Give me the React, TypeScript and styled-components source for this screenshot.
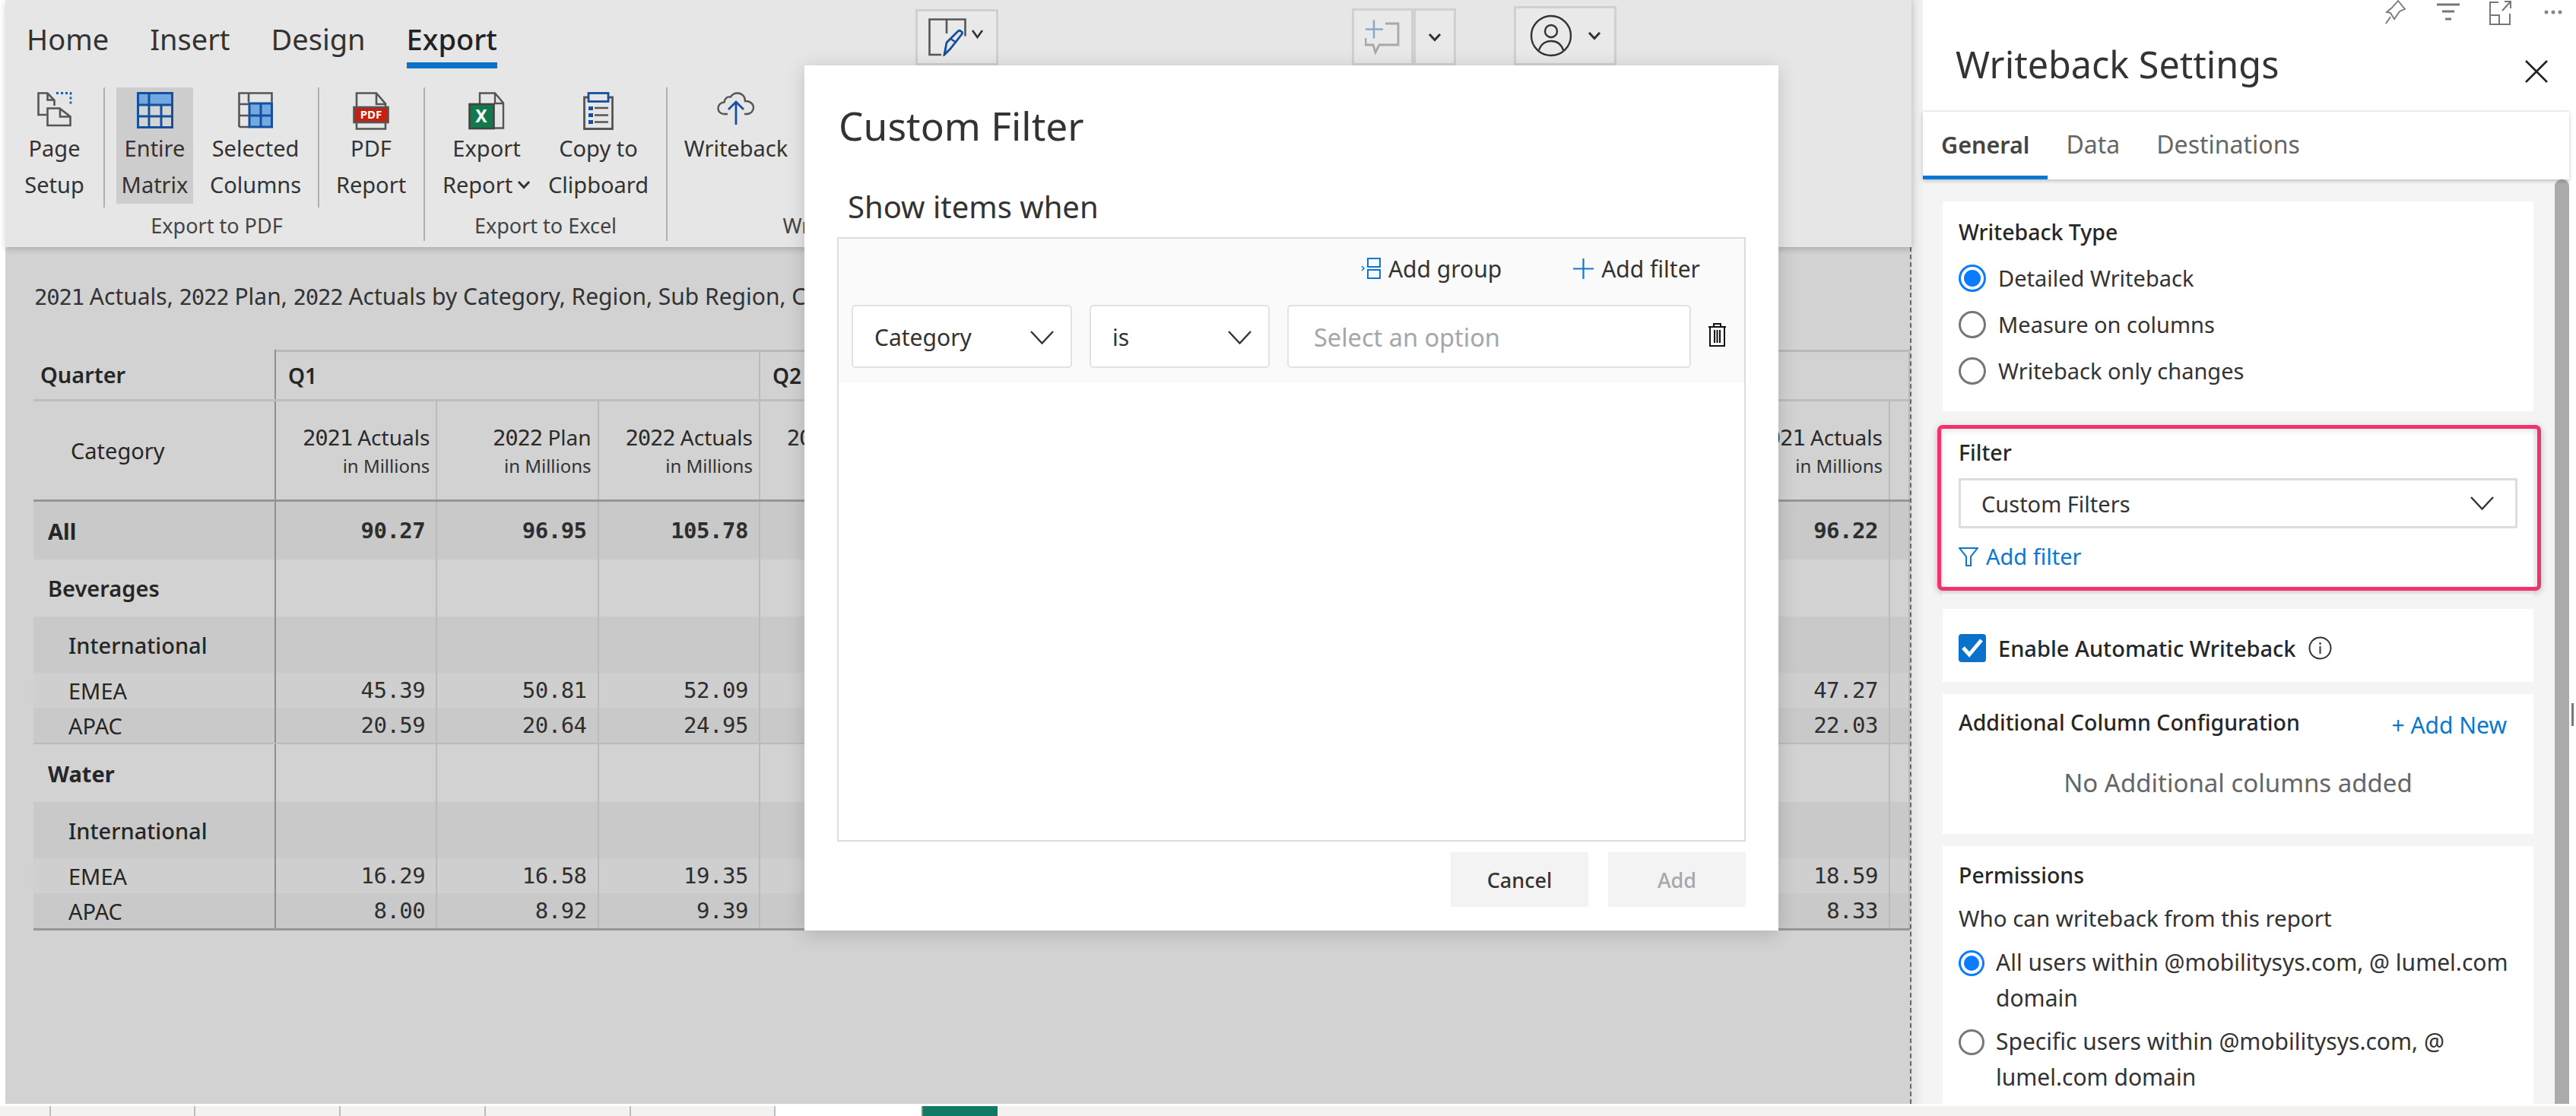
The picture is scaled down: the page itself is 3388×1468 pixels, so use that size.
import React from 'react';
import styled, { createGlobalStyle } from 'styled-components';

const GlobalStyle = createGlobalStyle`
  html, body {
    margin: 0;
    padding: 0;
    background: #ffffff;
  }
  body {
    font-family: "Noto Sans", "Open Sans", sans-serif;
    color: #333333;
  }
  * {
    box-sizing: border-box;
  }
`;

const Screen = styled.div`
  position: relative;
  width: 3388px;
  height: 1468px;
  overflow: hidden;
  background: #ffffff;
`;

const MainRow = styled.div`
  display: flex;
  height: 1452px;
  padding-left: 7px;
`;

const Report = styled.div`
  width: 2507px;
  background: #d2d2d2;
`;

const ReportBody = styled.div`
  height: 1127px;
  padding-top: 45px;
  border-right: 2px dashed #666666;
`;

const Ribbon = styled.div`
  position: relative;
  width: 2507px;
  height: 325px;
  background: #e6e6e6;
  box-shadow: 0 3px 8px rgba(0, 0, 0, 0.18);
`;

const TopRow = styled.div`
  display: flex;
  height: 115px;
  padding-left: 28px;
`;

const MenuTab = styled.div<{ $active?: boolean }>`
  height: 90px;
  margin-right: 54px;
  padding-top: 26px;
  line-height: 50px;
  font-size: 38px;
  font-weight: ${(p) => (p.$active ? 500 : 400)};
  color: ${(p) => (p.$active ? '#222222' : '#333333')};
  border-bottom: 8px solid ${(p) => (p.$active ? '#0a72c8' : 'transparent')};
`;

const ToolButton = styled.div<{ $left: number; $top: number; $width: number; $spread?: boolean }>`
  display: flex;
  align-items: center;
  justify-content: ${(p) => (p.$spread ? 'space-between' : 'center')};
  width: ${(p) => p.$width}px;
  height: ${(p) => 86 - p.$top}px;
  margin-left: ${(p) => p.$left}px;
  margin-top: ${(p) => p.$top}px;
  padding: ${(p) => (p.$spread ? '0 17px 0 18px' : '0')};
  background: #e9e9e9;
  border: 3px solid #d0d0d0;
`;

const RibbonBody = styled.div`
  display: flex;
  height: 202px;
`;

const Group = styled.div<{ $width: number; $last?: boolean }>`
  display: flex;
  flex-direction: column;
  width: ${(p) => p.$width}px;
  border-right: ${(p) => (p.$last ? 'none' : '2px solid #b0b0b0')};
`;

const GroupItems = styled.div`
  display: flex;
  height: 158px;
`;

const GroupLabel = styled.div<{ $shift?: number }>`
  height: 44px;
  padding-top: 2px;
  padding-left: ${(p) => p.$shift || 0}px;
  line-height: 44px;
  text-align: center;
  font-size: 27px;
  color: #444444;
`;

const RibbonButton = styled.div<{ $width: number; $active?: boolean; $gapLeft?: number; $gapRight?: number }>`
  display: flex;
  flex-direction: column;
  align-items: center;
  width: ${(p) => p.$width}px;
  height: 153px;
  margin-left: ${(p) => p.$gapLeft || 0}px;
  margin-right: ${(p) => p.$gapRight || 0}px;
  background: ${(p) => (p.$active ? '#cdcdcd' : 'transparent')};
`;

const IconSlot = styled.div`
  display: flex;
  align-items: flex-start;
  justify-content: center;
  height: 56px;
  padding-top: 6px;
`;

const ButtonLabel = styled.div`
  display: flex;
  align-items: center;
  gap: 6px;
  height: 48px;
  line-height: 48px;
  font-size: 29px;
  white-space: nowrap;
  color: #333333;
`;

const ShortRule = styled.div`
  width: 2px;
  height: 158px;
  background: #b0b0b0;
`;

const ReportTitle = styled.div`
  margin: 0 0 50px 38px;
  height: 40px;
  line-height: 40px;
  font-size: 30px;
  white-space: nowrap;
  color: #333333;
`;

const Digits = styled.span`
  font-family: "DejaVu Sans Mono", monospace;
  font-size: 29px;
  line-height: 30px;
  letter-spacing: -1.2px;
`;

const MatrixTable = styled.div`
  margin-left: 37px;
  width: 2468px;
  overflow: hidden;
`;

const MatrixRow = styled.div<{ $height: number; $tone?: 'dark' | 'light' | 'mid'; $rule?: string }>`
  display: grid;
  grid-template-columns: 319px repeat(10, 212.3px) 26px;
  height: ${(p) => p.$height}px;
  background: ${(p) =>
    p.$tone === 'dark' ? '#c9c9c9' : p.$tone === 'mid' ? '#cfcfcf' : '#d2d2d2'};
  border-bottom: ${(p) => p.$rule || 'none'};
`;

const Corner = styled.div<{ $indent: number; $weight?: number }>`
  display: flex;
  align-items: center;
  padding-left: ${(p) => p.$indent}px;
  font-size: 29px;
  font-weight: ${(p) => p.$weight || 400};
  color: #262626;
  border-right: 2px solid #8f8f8f;
`;

const QuarterCell = styled.div<{ $span: number }>`
  display: flex;
  align-items: center;
  grid-column: span ${(p) => p.$span};
  padding-left: 16px;
  font-size: 28px;
  font-weight: 600;
  color: #262626;
  border-top: 3px solid #b9b9b9;
  border-right: 2px solid #bbbbbb;
`;

const MeasureCell = styled.div`
  display: flex;
  flex-direction: column;
  align-items: flex-end;
  justify-content: center;
  padding-right: 8px;
  font-size: 28px;
  white-space: nowrap;
  color: #2b2b2b;
  border-right: 2px solid #bbbbbb;
`;

const MeasureName = styled.span`
  height: 40px;
  line-height: 40px;
`;

const MeasureUnit = styled.span`
  height: 36px;
  line-height: 36px;
  font-size: 24px;
  color: #333333;
`;

const ValueCell = styled.div<{ $bold?: boolean }>`
  display: flex;
  align-items: center;
  justify-content: flex-end;
  padding-right: 14px;
  font-family: "DejaVu Sans Mono", monospace;
  font-size: 29px;
  letter-spacing: -0.5px;
  font-weight: ${(p) => (p.$bold ? 700 : 400)};
  color: #2e2e2e;
  border-right: 2px solid #bbbbbb;
`;

const Strip = styled.div`
  width: 15px;
  background: linear-gradient(to right, #e3e3e3, #f2f2f2);
`;

const Panel = styled.div`
  display: flex;
  flex-direction: column;
  width: 850px;
  height: 1452px;
  background: #ffffff;
`;

const PanelIcons = styled.div`
  display: flex;
  justify-content: flex-end;
  gap: 39px;
  height: 36px;
  padding-right: 6px;
`;

const PanelHeader = styled.div`
  display: flex;
  justify-content: space-between;
  height: 111px;
  padding-left: 43px;
  border-bottom: 2px solid #f2f2f2;
`;

const PanelTitle = styled.div`
  margin-top: 15px;
  line-height: 66px;
  font-size: 48.5px;
  color: #333333;
`;

const CloseSlot = styled.div`
  margin-top: 42px;
  margin-right: 27px;
`;

const PanelTabs = styled.div`
  position: relative;
  z-index: 1;
  display: flex;
  height: 89px;
  background: #ffffff;
  box-shadow: 0 2px 5px rgba(0, 0, 0, 0.22);
`;

const PanelTab = styled.div<{ $active?: boolean }>`
  height: 89px;
  padding: 18px 24px 0;
  line-height: 50px;
  font-size: ${(p) => (p.$active ? 30.5 : 32)}px;
  font-weight: ${(p) => (p.$active ? 600 : 400)};
  color: ${(p) => (p.$active ? '#444444' : '#666666')};
  border-bottom: 5px solid ${(p) => (p.$active ? '#0078d4' : 'transparent')};
`;

const PanelBody = styled.div`
  display: flex;
  flex: 1;
  min-height: 0;
  background: #f4f4f4;
`;

const CardColumn = styled.div`
  display: flex;
  flex-direction: column;
  gap: 16px;
  width: 831px;
  height: 100%;
  padding: 29px 0 0 26px;
  overflow: hidden;
`;

const ScrollThumb = styled.div`
  width: 19px;
  height: 100%;
  background: #ababab;
  border-radius: 9px 9px 0 0;
`;

const EdgeColumn = styled.div`
  width: 9px;
  padding: 925px 3px 0 3px;
`;

const EdgeTick = styled.div`
  width: 3px;
  height: 30px;
  background: #777777;
`;

const Card = styled.div<{ $height: number; $top?: number }>`
  position: relative;
  flex: none;
  width: 777px;
  height: ${(p) => p.$height}px;
  padding: ${(p) => p.$top ?? 18}px 21px 0;
  background: #ffffff;
`;

const CardHeading = styled.div`
  line-height: 40px;
  font-size: 28.5px;
  font-weight: 500;
  color: #262626;
  white-space: nowrap;
`;

const RadioStack = styled.div`
  margin-top: 10px;
`;

const RadioRow = styled.div`
  display: flex;
  align-items: center;
  gap: 16px;
  height: 61px;
  font-size: 29px;
  color: #333333;
`;

const RadioMark = styled.span<{ $checked?: boolean; $size: number }>`
  display: flex;
  flex: none;
  align-items: center;
  justify-content: center;
  width: ${(p) => p.$size}px;
  height: ${(p) => p.$size}px;
  border: 3px solid ${(p) => (p.$checked ? '#0a7cff' : '#777777')};
  border-radius: 50%;
  &::after {
    content: '';
    display: ${(p) => (p.$checked ? 'block' : 'none')};
    width: ${(p) => p.$size - 14}px;
    height: ${(p) => p.$size - 14}px;
    border-radius: 50%;
    background: #0a7cff;
  }
`;

const HighlightFrame = styled.div`
  position: absolute;
  left: -7px;
  top: 2px;
  width: 794px;
  height: 218px;
  border: 5px solid #f0336c;
  border-radius: 7px;
  box-shadow: 0 2px 8px rgba(0, 0, 0, 0.25), inset 0 2px 8px rgba(0, 0, 0, 0.12);
`;

const SelectBox = styled.div`
  display: flex;
  align-items: center;
  justify-content: space-between;
  height: 66px;
  margin-top: 14px;
  padding: 0 28px 0 27px;
  border: 3px solid #dddddd;
  font-size: 29px;
  color: #333333;
`;

const BlueLink = styled.div`
  display: flex;
  align-items: center;
  gap: 10px;
  margin-top: 17px;
  line-height: 40px;
  font-size: 29px;
  color: #0a78d2;
`;

const AutoRow = styled.div`
  display: flex;
  align-items: center;
  gap: 16px;
  height: 40px;
  font-size: 29px;
  font-weight: 500;
  color: #262626;
`;

const CheckMark = styled.span`
  display: flex;
  flex: none;
  align-items: center;
  justify-content: center;
  width: 36px;
  height: 37px;
  background: #0b72cc;
  border-radius: 4px;
`;

const HeadingRow = styled.div`
  display: flex;
  align-items: center;
  justify-content: space-between;
  height: 40px;
  padding-right: 14px;
`;

const AddNew = styled.span`
  padding-top: 6px;
  font-size: 30px;
  color: #0a78d2;
`;

const EmptyNote = styled.div`
  margin-top: 40px;
  line-height: 40px;
  text-align: center;
  font-size: 33px;
  color: #666666;
`;

const BodyLine = styled.div`
  margin-top: 17px;
  line-height: 40px;
  font-size: 29.5px;
  color: #333333;
`;

const PermissionOption = styled.div<{ $top: number }>`
  display: flex;
  gap: 15px;
  margin-top: ${(p) => p.$top}px;
  width: 730px;
  line-height: 47px;
  font-size: 30px;
  color: #333333;
`;

const RadioOffset = styled.span`
  padding-top: 8px;
`;

const BottomBar = styled.div`
  display: flex;
  height: 13px;
  margin-top: 3px;
  background: #f3f2f1;
`;

const SheetTab = styled.div<{ $width: number; $white?: boolean; $teal?: boolean }>`
  width: ${(p) => p.$width}px;
  background: ${(p) => (p.$white ? '#ffffff' : p.$teal ? '#127a63' : 'transparent')};
  border-right: 2px solid ${(p) => (p.$white ? '#888888' : p.$teal ? 'transparent' : '#bdbdbd')};
`;

const Modal = styled.div`
  position: absolute;
  left: 1058px;
  top: 86px;
  width: 1281px;
  height: 1138px;
  padding: 49px 43px 0;
  background: #ffffff;
  box-shadow: 0 4px 24px rgba(0, 0, 0, 0.16);
`;

const ModalTitle = styled.div`
  margin-left: 2px;
  line-height: 60px;
  font-size: 51.5px;
  color: #333333;
`;

const ModalSub = styled.div`
  margin: 52px 0 15px 14px;
  line-height: 50px;
  font-size: 40px;
  color: #333333;
`;

const FilterBox = styled.div`
  width: 1195px;
  height: 795px;
  border: 2px solid #dddddd;
`;

const FilterHead = styled.div`
  height: 190px;
  background: #fafafa;
`;

const FilterActions = styled.div`
  display: flex;
  align-items: center;
  justify-content: flex-end;
  gap: 94px;
  height: 78px;
  padding-right: 58px;
`;

const FilterAction = styled.div`
  display: flex;
  align-items: center;
  gap: 10px;
  font-size: 30px;
  color: #333333;
`;

const FilterFields = styled.div`
  display: flex;
  align-items: center;
  gap: 23px;
  margin-top: 9px;
  padding-left: 17px;
`;

const FieldBox = styled.div<{ $width: number; $hint?: boolean }>`
  display: flex;
  align-items: center;
  justify-content: space-between;
  width: ${(p) => p.$width}px;
  height: 83px;
  padding: 2px 22px 0 ${(p) => (p.$hint ? 33 : 28)}px;
  background: #ffffff;
  border: 2px solid #e2e2e2;
  border-radius: 5px;
  font-size: ${(p) => (p.$hint ? 32.5 : 30)}px;
  color: ${(p) => (p.$hint ? '#a6a6a6' : '#333333')};
`;

const ModalFooter = styled.div`
  display: flex;
  justify-content: flex-end;
  gap: 26px;
  width: 1195px;
  margin-top: 14px;
`;

const FooterButton = styled.div<{ $disabled?: boolean }>`
  display: flex;
  align-items: center;
  justify-content: center;
  width: 181px;
  height: 72px;
  background: #f3f3f3;
  font-size: 27px;
  font-weight: 500;
  color: ${(p) => (p.$disabled ? '#a8a8a8' : '#333333')};
`;

const Chevron = () => (
  <svg width={31} height={18} viewBox="0 0 31 18" fill="none">
    <polyline points="1,1 15.5,16.5 30,1" stroke="#333333" strokeWidth="2.4" />
  </svg>
);

const SmallChevron = () => (
  <svg width={18} height={12} viewBox="0 0 18 12" fill="none">
    <polyline points="2,2 9,9.5 16,2" stroke="#333333" strokeWidth="3" />
  </svg>
);

const PageSetupIcon = () => (
  <svg width={46} height={46} viewBox="0 0 46 46" fill="none" stroke="#555555" strokeWidth="2.6">
    <path d="M12 30H1.5V1.5h12l9 9.5v7" />
    <path d="M13.5 1.5v9h9" />
    <path d="M13.5 21.5h16l14 11v11.5h-30z" />
    <path d="M30 21.5v11h13" />
    <path d="M25 1.5h19v17" stroke="#1c5fb0" strokeWidth="2.8" strokeDasharray="3 3" />
  </svg>
);

const EntireMatrixIcon = () => (
  <svg width={48} height={48} viewBox="0 0 48 48" fill="none">
    <rect x="1.5" y="1.5" width="45" height="45" fill="#d4d4d4" stroke="#154f9e" strokeWidth="3" />
    <rect x="3" y="3" width="42" height="14" fill="#72a9e0" />
    <path d="M1.5 17h45M1.5 32h45M16 1.5v15M16 17v29.5M32 17v29.5" stroke="#154f9e" strokeWidth="3" />
  </svg>
);

const SelectedColumnsIcon = () => (
  <svg width={46} height={48} viewBox="0 0 46 48" fill="none">
    <path d="M1.5 46V1.5h43v12M14 1.5v12M1.5 16H14M1.5 31H14M1.5 46H14" stroke="#555555" strokeWidth="2.6" />
    <rect x="15" y="15" width="29.5" height="31" fill="#72a9e0" stroke="#154f9e" strokeWidth="3" />
    <path d="M30 15v31M15 31h29.5" stroke="#154f9e" strokeWidth="3" />
  </svg>
);

const PdfIcon = () => (
  <svg width={48} height={50} viewBox="0 0 48 50" fill="none">
    <path d="M5 20V1.5h26l12 14V20M5 36v12.5h38V36M31 1.5V16h12" stroke="#555555" strokeWidth="2.6" />
    <rect x="1.5" y="20" width="45" height="20" fill="#c8200f" stroke="#555555" strokeWidth="2.6" />
    <text x="24" y="35" textAnchor="middle" fontFamily="Noto Sans" fontWeight="700" fontSize="15" fill="#ffffff">
      PDF
    </text>
  </svg>
);

const ExcelIcon = () => (
  <svg width={48} height={50} viewBox="0 0 48 50" fill="none">
    <path d="M15 15V1.5h20l11 13v33H33M35 1.5V15h11" stroke="#555555" strokeWidth="2.4" />
    <rect x="1.5" y="16" width="32" height="32" fill="#107a4d" stroke="#444444" strokeWidth="2.6" />
    <text x="17" y="40" textAnchor="middle" fontFamily="Noto Sans" fontWeight="700" fontSize="23" fill="#ffffff">
      X
    </text>
  </svg>
);

const ClipboardIcon = () => (
  <svg width={40} height={50} viewBox="0 0 40 50" fill="none">
    <path d="M7 7H1.5v41.5h37V7H33" stroke="#555555" strokeWidth="2.8" />
    <rect x="7" y="1.5" width="26" height="11" fill="#e6e6e6" stroke="#154f9e" strokeWidth="2.8" />
    <rect x="7" y="19" width="6" height="5" fill="#154f9e" />
    <rect x="7" y="28" width="6" height="5" fill="#154f9e" />
    <rect x="7" y="37" width="6" height="5" fill="#154f9e" />
    <path d="M15 21h18M15 30.5h18M15 39.5h18" stroke="#555555" strokeWidth="2.4" />
  </svg>
);

const CloudIcon = () => (
  <svg width={50} height={44} viewBox="0 0 50 44" fill="none">
    <path
      d="M14 29H9C4 29 1.5 25 1.5 21.5 1.5 17 5 13.5 9.5 13.5 10.5 8 14 6 18 6.5 20 3 23.5 1.5 27 1.5c6 0 10 4.5 10 10.5 6-.5 11 3.5 11 8.5 0 5-4 8.5-9 8.5h-3"
      stroke="#555555"
      strokeWidth="2.4"
    />
    <path d="M25 43V13M15 23l10-10 10 10" stroke="#154f9e" strokeWidth="2.8" />
  </svg>
);

const PenTableIcon = () => (
  <svg width={74} height={50} viewBox="0 0 74 50" fill="none">
    <path d="M17 48H1.5V1.5h47v22M24 1.5V20" stroke="#555555" strokeWidth="2.6" />
    <path d="M21 48l3-16 15-15c2-2 7 1 5 4L29 40z" fill="#e6e6e6" stroke="#154f9e" strokeWidth="2.8" />
    <path d="M29 27l8 5" stroke="#154f9e" strokeWidth="2.4" />
    <polyline points="58,16 64.5,25 71,16" stroke="#333333" strokeWidth="2.6" />
  </svg>
);

const CommentIcon = () => (
  <svg width={46} height={48} viewBox="0 0 46 48" fill="none">
    <path d="M12 1.5v24M1 13.5h23" stroke="#8ca6c8" strokeWidth="2.5" />
    <path d="M27 6h17v28H19l-5 10-3-10H1V25" stroke="#a8a8a8" strokeWidth="2.8" />
  </svg>
);

const PersonIcon = () => (
  <svg width={56} height={56} viewBox="0 0 56 56" fill="none" stroke="#333333" strokeWidth="2.4">
    <circle cx="28" cy="28" r="26" />
    <circle cx="28" cy="22" r="8" />
    <path d="M12 47c3-9 9-12 16-12s13 3 16 12" />
  </svg>
);

const PinIcon = () => (
  <svg width={30} height={32} viewBox="0 0 30 32" fill="none" stroke="#777777" strokeWidth="1.8">
    <path d="M18 1l9 11-7 3-7 10-5-8-5-1 7-6z" />
    <path d="M8 22L2 31" />
  </svg>
);

const SortIcon = () => (
  <svg width={30} height={28} viewBox="0 0 30 28" fill="none" stroke="#777777" strokeWidth="3">
    <path d="M0 6h30M7 15h16M11 25h8" />
  </svg>
);

const ExpandIcon = () => (
  <svg width={30} height={34} viewBox="0 0 30 34" fill="none" stroke="#777777" strokeWidth="2">
    <path d="M12 3H1v29h26V18M1 20h12v12M17 14L28 2M20 2h8v9" />
  </svg>
);

const DotsIcon = () => (
  <svg width={30} height={32} viewBox="0 0 30 32" fill="#888888">
    <circle cx="6" cy="16" r="2.5" />
    <circle cx="15" cy="16" r="2.5" />
    <circle cx="24" cy="16" r="2.5" />
  </svg>
);

const CloseIcon = () => (
  <svg width={32} height={32} viewBox="0 0 32 32" fill="none" stroke="#222222" strokeWidth="2.6">
    <path d="M2 2l28 28M30 2L2 30" />
  </svg>
);

const CheckIcon = () => (
  <svg width={30} height={28} viewBox="0 0 30 28" fill="none" stroke="#ffffff" strokeWidth="5">
    <path d="M3 14l8 9L27 4" />
  </svg>
);

const InfoIcon = () => (
  <svg width={31} height={31} viewBox="0 0 31 31" fill="none" stroke="#333333" strokeWidth="2">
    <circle cx="15.5" cy="15.5" r="14" />
    <path d="M15.5 13v10M15.5 8v3" />
  </svg>
);

const FunnelIcon = () => (
  <svg width={26} height={25} viewBox="0 0 26 25" fill="none" stroke="#0a78d2" strokeWidth="2">
    <path d="M1 1h24l-9 11v12h-6V12z" />
  </svg>
);

const GroupIcon = () => (
  <svg width={26} height={28} viewBox="0 0 26 28" fill="none" stroke="#0a78d2" strokeWidth="2">
    <rect x="9" y="1" width="16" height="11" />
    <rect x="9" y="16" width="16" height="11" />
    <path d="M1 11l3 3-3 3" strokeWidth="1.5" />
  </svg>
);

const PlusIcon = () => (
  <svg width={27} height={27} viewBox="0 0 27 27" fill="none" stroke="#0a78d2" strokeWidth="2.2">
    <path d="M13.5 0v27M0 13.5h27" />
  </svg>
);

const TrashIcon = () => (
  <svg width={25} height={33} viewBox="0 0 25 33" fill="none" stroke="#111111" strokeWidth="2">
    <path d="M1 6h23M8 6V2h9v4M3 6v25h19V6M9 10v17M12.5 10v17M16 10v17" />
  </svg>
);

const TrashSlot = styled.span`
  margin-left: -1px;
`;

type Row = {
  label: string;
  indent: number;
  height: number;
  tone: 'dark' | 'light' | 'mid';
  weight?: number;
  rule?: string;
  values: string[];
  last?: string;
  bold?: boolean;
};

const rows: Row[] = [
  { label: 'All', indent: 19, height: 76, tone: 'dark', weight: 700, values: ['90.27', '96.95', '105.78'], last: '96.22', bold: true },
  { label: 'Beverages', indent: 19, height: 75, tone: 'light', weight: 600, values: [] },
  { label: 'International', indent: 46, height: 74, tone: 'dark', weight: 500, values: [] },
  { label: 'EMEA', indent: 46, height: 46, tone: 'mid', values: ['45.39', '50.81', '52.09'], last: '47.27' },
  { label: 'APAC', indent: 46, height: 48, tone: 'dark', rule: '2px solid #bbbbbb', values: ['20.59', '20.64', '24.95'], last: '22.03' },
  { label: 'Water', indent: 19, height: 76, tone: 'light', weight: 700, values: [] },
  { label: 'International', indent: 46, height: 74, tone: 'dark', weight: 500, values: [] },
  { label: 'EMEA', indent: 46, height: 46, tone: 'mid', values: ['16.29', '16.58', '19.35'], last: '18.59' },
  { label: 'APAC', indent: 46, height: 49, tone: 'dark', rule: '3px solid #969696', values: ['8.00', '8.92', '9.39'], last: '8.33' },
];

const measures = ['2021 Actuals', '2022 Plan', '2022 Actuals'];

const MeasureHead = ({ text }: { text: string }) => {
  const [year, name] = text.split(' ');
  return (
    <MeasureCell>
      <MeasureName>
        <Digits>{year}</Digits> {name}
      </MeasureName>
      <MeasureUnit>in Millions</MeasureUnit>
    </MeasureCell>
  );
};

const App = () => {
  return (
    <Screen>
      <GlobalStyle />
      <MainRow>
        <Report>
          <Ribbon>
            <TopRow>
              <MenuTab>Home</MenuTab>
              <MenuTab>Insert</MenuTab>
              <MenuTab>Design</MenuTab>
              <MenuTab $active>Export</MenuTab>
              <ToolButton $left={496} $top={12} $width={109}>
                <PenTableIcon />
              </ToolButton>
              <ToolButton $left={465} $top={11} $width={81}>
                <CommentIcon />
              </ToolButton>
              <ToolButton $left={0} $top={11} $width={56}>
                <SmallChevron />
              </ToolButton>
              <ToolButton $left={76} $top={8} $width={135} $spread>
                <PersonIcon />
                <SmallChevron />
              </ToolButton>
            </TopRow>
            <RibbonBody>
              <Group $width={552}>
                <GroupItems>
                  <RibbonButton $width={129}>
                    <IconSlot>
                      <PageSetupIcon />
                    </IconSlot>
                    <ButtonLabel>Page</ButtonLabel>
                    <ButtonLabel>Setup</ButtonLabel>
                  </RibbonButton>
                  <ShortRule />
                  <RibbonButton $width={101} $active $gapLeft={15}>
                    <IconSlot>
                      <EntireMatrixIcon />
                    </IconSlot>
                    <ButtonLabel>Entire</ButtonLabel>
                    <ButtonLabel>Matrix</ButtonLabel>
                  </RibbonButton>
                  <RibbonButton $width={164}>
                    <IconSlot>
                      <SelectedColumnsIcon />
                    </IconSlot>
                    <ButtonLabel>Selected</ButtonLabel>
                    <ButtonLabel>Columns</ButtonLabel>
                  </RibbonButton>
                  <ShortRule />
                  <RibbonButton $width={136}>
                    <IconSlot>
                      <PdfIcon />
                    </IconSlot>
                    <ButtonLabel>PDF</ButtonLabel>
                    <ButtonLabel>Report</ButtonLabel>
                  </RibbonButton>
                </GroupItems>
                <GroupLabel $shift={6}>Export to PDF</GroupLabel>
              </Group>
              <Group $width={319}>
                <GroupItems>
                  <RibbonButton $width={162}>
                    <IconSlot>
                      <ExcelIcon />
                    </IconSlot>
                    <ButtonLabel>Export</ButtonLabel>
                    <ButtonLabel>
                      Report
                      <SmallChevron />
                    </ButtonLabel>
                  </RibbonButton>
                  <RibbonButton $width={132} $gapRight={23}>
                    <IconSlot>
                      <ClipboardIcon />
                    </IconSlot>
                    <ButtonLabel>Copy to</ButtonLabel>
                    <ButtonLabel>Clipboard</ButtonLabel>
                  </RibbonButton>
                </GroupItems>
                <GroupLabel>Export to Excel</GroupLabel>
              </Group>
              <Group $width={430} $last>
                <GroupItems>
                  <RibbonButton $width={180}>
                    <IconSlot>
                      <CloudIcon />
                    </IconSlot>
                    <ButtonLabel>Writeback</ButtonLabel>
                  </RibbonButton>
                </GroupItems>
                <GroupLabel>Writeback</GroupLabel>
              </Group>
            </RibbonBody>
          </Ribbon>

          <ReportBody>
            <ReportTitle>
              <Digits>2021</Digits> Actuals, <Digits>2022</Digits> Plan, <Digits>2022</Digits> Actuals by Category, Region, Sub Region, Channel
            </ReportTitle>

            <MatrixTable>
              <MatrixRow $height={68} $rule="3px solid #bdbdbd">
                <Corner $indent={9} $weight={600}>Quarter</Corner>
                <QuarterCell $span={3}>Q1</QuarterCell>
                <QuarterCell $span={3}>Q2</QuarterCell>
                <QuarterCell $span={3}>Q3</QuarterCell>
                <QuarterCell $span={2}>Q4</QuarterCell>
              </MatrixRow>
              <MatrixRow $height={132} $rule="3px solid #969696">
                <Corner $indent={49}>Category</Corner>
                {[...measures, ...measures, ...measures, measures[0]].map((m, i) => (
                  <MeasureHead key={i} text={m} />
                ))}
                <MeasureCell />
              </MatrixRow>
              {rows.map((row, i) => (
                <MatrixRow key={i} $height={row.height} $tone={row.tone} $rule={row.rule}>
                  <Corner $indent={row.indent} $weight={row.weight}>
                    {row.label}
                  </Corner>
                  {Array.from({ length: 11 }).map((_, c) => (
                    <ValueCell key={c} $bold={row.bold}>
                      {c < 3 ? row.values[c] : c === 9 ? row.last : ''}
                    </ValueCell>
                  ))}
                </MatrixRow>
              ))}
            </MatrixTable>
          </ReportBody>
        </Report>

        <Strip />

        <Panel>
          <PanelIcons>
            <PinIcon />
            <SortIcon />
            <ExpandIcon />
            <DotsIcon />
          </PanelIcons>
          <PanelHeader>
            <PanelTitle>Writeback Settings</PanelTitle>
            <CloseSlot>
              <CloseIcon />
            </CloseSlot>
          </PanelHeader>
          <PanelTabs>
            <PanelTab $active>General</PanelTab>
            <PanelTab>Data</PanelTab>
            <PanelTab>Destinations</PanelTab>
          </PanelTabs>
          <PanelBody>
            <CardColumn>
              <Card $height={276} $top={20}>
                <CardHeading>Writeback Type</CardHeading>
                <RadioStack>
                  <RadioRow>
                    <RadioMark $checked $size={36} />
                    Detailed Writeback
                  </RadioRow>
                  <RadioRow>
                    <RadioMark $size={36} />
                    Measure on columns
                  </RadioRow>
                  <RadioRow>
                    <RadioMark $size={36} />
                    Writeback only changes
                  </RadioRow>
                </RadioStack>
              </Card>
              <Card $height={228}>
                <CardHeading>Filter</CardHeading>
                <SelectBox>
                  Custom Filters
                  <Chevron />
                </SelectBox>
                <BlueLink>
                  <FunnelIcon />
                  Add filter
                </BlueLink>
                <HighlightFrame />
              </Card>
              <Card $height={96} $top={31}>
                <AutoRow>
                  <CheckMark>
                    <CheckIcon />
                  </CheckMark>
                  Enable Automatic Writeback
                  <InfoIcon />
                </AutoRow>
              </Card>
              <Card $height={184} $top={17}>
                <HeadingRow>
                  <CardHeading>Additional Column Configuration</CardHeading>
                  <AddNew>+ Add New</AddNew>
                </HeadingRow>
                <EmptyNote>No Additional columns added</EmptyNote>
              </Card>
              <Card $height={340}>
                <CardHeading>Permissions</CardHeading>
                <BodyLine>Who can writeback from this report</BodyLine>
                <PermissionOption $top={14}>
                  <RadioOffset>
                    <RadioMark $checked $size={34} />
                  </RadioOffset>
                  <span>All users within @mobilitysys.com, @ lumel.com domain</span>
                </PermissionOption>
                <PermissionOption $top={10}>
                  <RadioOffset>
                    <RadioMark $size={34} />
                  </RadioOffset>
                  <span>Specific users within @mobilitysys.com, @ lumel.com domain</span>
                </PermissionOption>
              </Card>
            </CardColumn>
            <ScrollThumb />
          </PanelBody>
        </Panel>
        <EdgeColumn>
          <EdgeTick />
        </EdgeColumn>
      </MainRow>

      <BottomBar>
        <SheetTab $width={67} />
        <SheetTab $width={190} />
        <SheetTab $width={191} />
        <SheetTab $width={191} />
        <SheetTab $width={191} />
        <SheetTab $width={190} />
        <SheetTab $width={194} $white />
        <SheetTab $width={98} $teal />
      </BottomBar>

      <Modal>
        <ModalTitle>Custom Filter</ModalTitle>
        <ModalSub>Show items when</ModalSub>
        <FilterBox>
          <FilterHead>
            <FilterActions>
              <FilterAction>
                <GroupIcon />
                Add group
              </FilterAction>
              <FilterAction>
                <PlusIcon />
                Add filter
              </FilterAction>
            </FilterActions>
            <FilterFields>
              <FieldBox $width={290}>
                Category
                <Chevron />
              </FieldBox>
              <FieldBox $width={237}>
                is
                <Chevron />
              </FieldBox>
              <FieldBox $width={531} $hint>
                Select an option
              </FieldBox>
              <TrashSlot>
                <TrashIcon />
              </TrashSlot>
            </FilterFields>
          </FilterHead>
        </FilterBox>
        <ModalFooter>
          <FooterButton>Cancel</FooterButton>
          <FooterButton $disabled>Add</FooterButton>
        </ModalFooter>
      </Modal>
    </Screen>
  );
};

export default App;
